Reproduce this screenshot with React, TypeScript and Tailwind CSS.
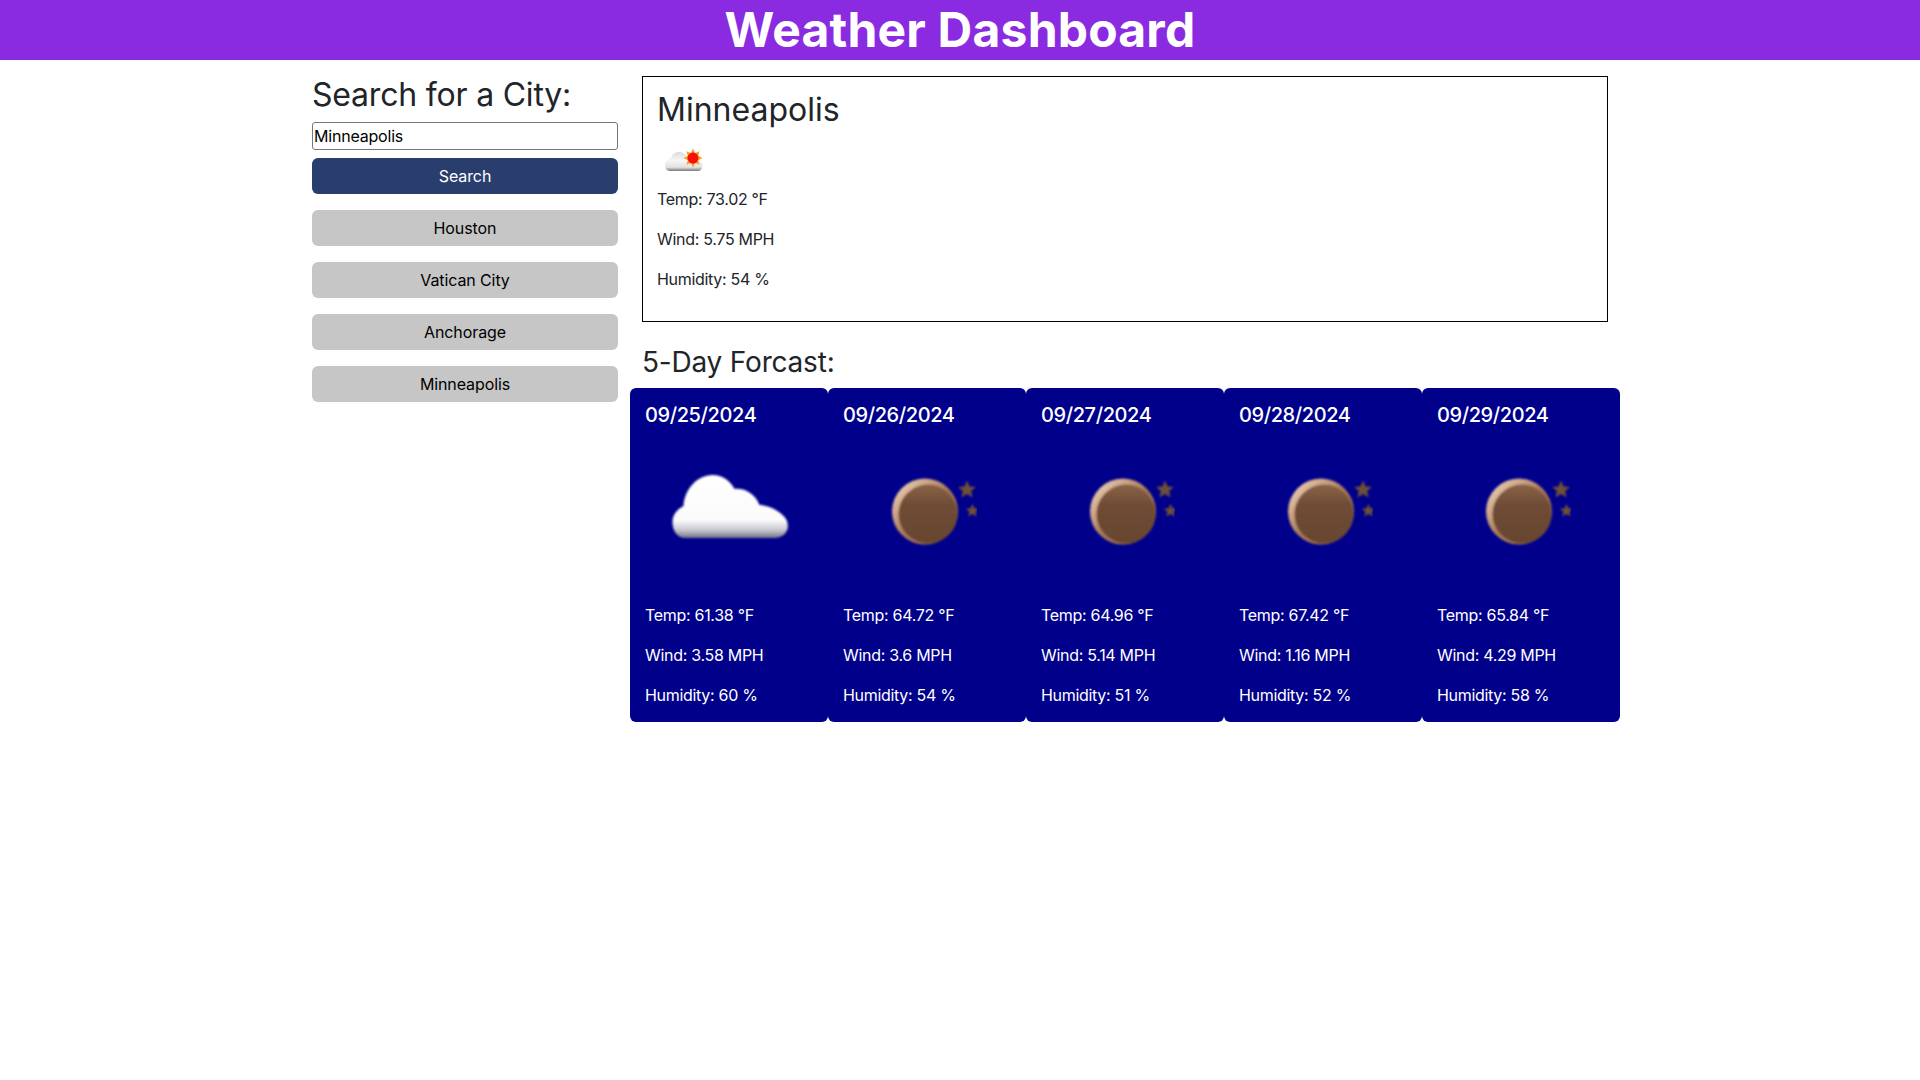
import { useId } from 'react';

const cities = ['Houston', 'Vatican City', 'Anchorage', 'Minneapolis'];

const forecast = [
  { date: '09/25/2024', icon: 'cloud', temp: '61.38', wind: '3.58', humidity: '60' },
  { date: '09/26/2024', icon: 'moon', temp: '64.72', wind: '3.6', humidity: '54' },
  { date: '09/27/2024', icon: 'moon', temp: '64.96', wind: '5.14', humidity: '51' },
  { date: '09/28/2024', icon: 'moon', temp: '67.42', wind: '1.16', humidity: '52' },
  { date: '09/29/2024', icon: 'moon', temp: '65.84', wind: '4.29', humidity: '58' },
];

const cloudPath =
  'M13 63 C4 63 0 55 0 47 C0 38 7 33 11 31 C12 14 25 0 40 0 C50 0 58 6 62 14 C70 13 82 17 87 30 C94 30 104 34 110 40 C115 44 116 50 115 54 C113 60 108 63 102 63 Z';

function CloudIcon() {
  const id = useId();
  return (
    <svg viewBox="0 0 116 100" className="w-[116px] h-[100px] overflow-visible">
      <defs>
        <linearGradient id={id} x1="0" y1="0" x2="0" y2="1">
          <stop offset="0" stopColor="#ffffff" />
          <stop offset="0.72" stopColor="#fbfbfb" />
          <stop offset="0.88" stopColor="#c4c4cc" />
          <stop offset="1" stopColor="#70708a" />
        </linearGradient>
        <filter id={`${id}b`}>
          <feGaussianBlur stdDeviation="1.1" />
        </filter>
      </defs>
      <path d={cloudPath} transform="translate(1.5,10)" fill={`url(#${id})`} filter={`url(#${id}b)`} />
    </svg>
  );
}

function MoonIcon() {
  const id = useId();
  const star = 'M0 -9 L2.6 -3 L9 -2.5 L4.2 1.6 L5.6 8 L0 4.6 L-5.6 8 L-4.2 1.6 L-9 -2.5 L-2.6 -3 Z';
  return (
    <svg viewBox="0 0 100 100" className="w-[100px] h-[100px]">
      <defs>
        <linearGradient id={id} x1="0" y1="0" x2="1" y2="1">
          <stop offset="0.1" stopColor="#ecccb0" />
          <stop offset="0.5" stopColor="#a87a58" />
          <stop offset="1" stopColor="#a06c46" />
        </linearGradient>
        <linearGradient id={`${id}i`} x1="0" y1="0" x2="0" y2="1">
          <stop offset="0" stopColor="#896346" />
          <stop offset="0.35" stopColor="#6f4c36" />
          <stop offset="1" stopColor="#68462e" />
        </linearGradient>
        <filter id={`${id}b`}>
          <feGaussianBlur stdDeviation="0.9" />
        </filter>
      </defs>
      <g filter={`url(#${id}b)`}>
        <circle cx="48" cy="46.5" r="33" fill={`url(#${id})`} />
        <circle cx="51" cy="49" r="29.5" fill={`url(#${id}i)`} />
        <path d={star} transform="translate(90,24.5)" fill="#6e5039" />
        <path d={star} transform="translate(95.5,45.5) scale(0.75)" fill="#6e5039" />
      </g>
    </svg>
  );
}

function SmallIcon() {
  const id = useId();
  return (
    <svg viewBox="0 0 50 50" className="w-[50px] h-[50px]">
      <defs>
        <linearGradient id={id} x1="0" y1="0" x2="0" y2="1">
          <stop offset="0" stopColor="#dcdcdc" />
          <stop offset="0.45" stopColor="#f6f6f6" />
          <stop offset="0.8" stopColor="#e2e2e2" />
          <stop offset="1" stopColor="#777777" />
        </linearGradient>
      </defs>
      <path
        d="M13 34 C9 34 8 30 8 28 C8 24 11 22 14 21 C15 17 18 15 22 15 C26 15 28 17 30 20 C34 20 41 20 44 24 C46 27 46 29 45 31 C44 33 43 34 41 34 Z"
        fill={`url(#${id})`}
      />
      {[0, 45, 90, 135, 180, 225, 270, 315].map((a) => (
        <path key={a} d="M-2.2 -5 L0 -9.5 L2.2 -5 Z" fill="#f7a21c" transform={`translate(36,21) rotate(${a})`} />
      ))}
      <circle cx="36" cy="21" r="5.5" fill="#f40f08" />
    </svg>
  );
}

export default function App() {
  return (
    <div className="min-h-[1080px] bg-white text-[#212529] font-['Inter','Liberation_Sans',sans-serif]">
      <header className="h-[60px] bg-[#8a2be2] flex items-center justify-center">
        <h1 className="text-[48px] leading-none font-bold text-white tracking-[0.2px]">Weather Dashboard</h1>
      </header>

      <main className="w-[1320px] mx-auto flex">
        {/* Search column */}
        <aside className="w-[330px] px-3 pt-[16px]">
          <h2 className="text-[32px] leading-[38px] font-normal tracking-[-0.2px]">Search for a City:</h2>
          <input
            readOnly
            value="Minneapolis"
            className="block w-full h-[28px] mt-[8px] px-[1px] text-[16px] tracking-[-0.2px] text-black bg-white border border-[#767676] rounded-[3px]"
          />
          <button className="block w-full h-[36px] mt-[8px] bg-[#293e6d] text-white text-[16px] tracking-[-0.1px] rounded-[6px]">
            Search
          </button>
          <div className="mt-[16px] flex flex-col gap-[16px]">
            {cities.map((city) => (
              <button key={city} className="block w-full h-[36px] bg-[#c6c6c6] text-black text-[16px] tracking-[-0.1px] rounded-[6px]">
                {city}
              </button>
            ))}
          </div>
        </aside>

        {/* Results column */}
        <section className="w-[990px] pt-[16px]">
          <div className="mx-3 h-[246px] border border-black px-[14px] pt-[14px]">
            <h2 className="text-[32px] leading-[38px] font-normal">Minneapolis</h2>
            <div className="mt-[8px] h-[50px]"><SmallIcon /></div>
            <div className="flex flex-col gap-[16px] text-[16px] leading-[24px] tracking-[-0.3px]">
              <p>Temp: 73.02 °F</p>
              <p>Wind: 5.75 MPH</p>
              <p>Humidity: 54 %</p>
            </div>
          </div>

          <h3 className="mx-3 mt-[23px] text-[28px] leading-[34px] font-normal tracking-[-0.2px]">5-Day Forcast:</h3>

          <div className="mt-[9px] flex">
            {forecast.map((day) => (
              <article
                key={day.date}
                className="w-[198px] h-[334px] bg-[#00008b] text-white rounded-[6px] px-[15px] pt-[15px]"
              >
                <h4 className="text-[20px] leading-[24px] font-medium tracking-[-0.4px]">{day.date}</h4>
                <div className="mt-[13px] h-[150px] flex items-center justify-center">
                  {day.icon === 'cloud' ? <CloudIcon /> : <MoonIcon />}
                </div>
                <div className="mt-[13px] flex flex-col gap-[16px] text-[16px] leading-[24px] tracking-[-0.3px]">
                  <p>Temp: {day.temp} °F</p>
                  <p>Wind: {day.wind} MPH</p>
                  <p>Humidity: {day.humidity} %</p>
                </div>
              </article>
            ))}
          </div>
        </section>
      </main>
    </div>
  );
}
